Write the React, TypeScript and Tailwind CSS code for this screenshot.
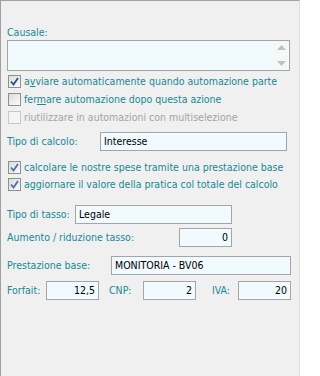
import React from "react";

const teal = "text-[#168a95]";

const Check = ({ checked, disabled, dim }: { checked?: boolean; disabled?: boolean; dim?: boolean }) => (
    <span
        className={`flex h-[13px] w-[13px] shrink-0 items-center justify-center border ${disabled ? "border-[#c8c8c8] bg-[#f4f4f4]" : "border-[#8e8f8f] bg-gradient-to-br from-[#dcdcdc] to-[#fbfbfb]"}`}
    >
        {checked && (
            <svg width="9" height="9" viewBox="0 0 9 9">
                <path d="M1 4.5 L3.5 7.5 L8 1" fill="none" stroke={dim ? "#4a6fae" : "#2e4c8c"} strokeWidth="1.8" />
            </svg>
        )}
    </span>
);

const Field = ({ value, className, right }: { value: string; className: string; right?: boolean }) => (
    <div className={`flex h-[19px] shrink-0 items-center border border-[#a5a5a5] bg-[#f0faff] px-[3px] text-black ${right ? "justify-end" : ""} ${className}`}>
        {value}
    </div>
);

export default function App() {
    return (
        <div
            className="flex h-[376px] w-[300px] flex-col overflow-hidden border-l border-t border-r border-[#a0a0a0] border-r-[#dedede] bg-[#f0f0f0] pl-[6px] pr-[8px] text-[10.5px] leading-[13px]"
            style={{ fontFamily: "Tahoma, 'DejaVu Sans Condensed', 'Liberation Sans', sans-serif" }}
        >
            <div className={`mt-[25px] whitespace-nowrap ${teal}`}>Causale:</div>
            <div className="mt-[1px] flex h-[31px] w-[283px] border border-[#a5a5a5] bg-[#f0faff]">
                <div className="flex-1" />
                <div className="flex w-[16px] flex-col items-center justify-between bg-[#f6f8f6] py-[4px]">
                    <svg width="9" height="5" viewBox="0 0 9 5">
                        <path d="M0 5 L4.5 0 L9 5 Z" fill="#b9c6bd" />
                    </svg>
                    <svg width="9" height="5" viewBox="0 0 9 5">
                        <path d="M0 0 L4.5 5 L9 0 Z" fill="#b9c6bd" />
                    </svg>
                </div>
            </div>

            <div className="mt-[1px] flex flex-col whitespace-nowrap">
                <label className={`flex h-[18px] items-center gap-[3px] pl-[1px] ${teal}`}>
                    <Check checked />
                    <span>a<span className="underline">v</span>viare automaticamente quando automazione parte</span>
                </label>
                <label className={`flex h-[18px] items-center gap-[3px] pl-[1px] ${teal}`}>
                    <Check />
                    <span>fer<span className="underline">m</span>are automazione dopo questa azione</span>
                </label>
                <label className="flex h-[18px] items-center gap-[3px] pl-[1px] text-[#a3a3a3]">
                    <Check disabled />
                    <span>riutilizzare in automazioni con multiselezione</span>
                </label>
            </div>

            <div className={`mt-[6px] flex items-center whitespace-nowrap ${teal}`}>
                <span className="w-[93px]">Tipo di calcolo:</span>
                <Field value="Interesse" className="w-[187px]" />
            </div>

            <div className="mt-[8px] flex flex-col whitespace-nowrap">
                <label className={`flex h-[17px] items-center gap-[3px] pl-[1px] ${teal}`}>
                    <Check checked dim />
                    <span>calcolare le nostre spese tramite una prestazione base</span>
                </label>
                <label className={`flex h-[17px] items-center gap-[3px] pl-[1px] ${teal}`}>
                    <Check checked dim />
                    <span>aggiornare il valore della pratica col totale del calcolo</span>
                </label>
            </div>

            <div className={`mt-[12px] flex items-center whitespace-nowrap ${teal}`}>
                <span className="w-[68px]">Tipo di tasso:</span>
                <Field value="Legale" className="w-[157px]" />
            </div>

            <div className={`mt-[4px] flex items-center whitespace-nowrap ${teal}`}>
                <span className="w-[172px]">Aumento / riduzione tasso:</span>
                <Field value="0" right className="w-[53px]" />
            </div>

            <div className={`mt-[9px] flex items-center whitespace-nowrap ${teal}`}>
                <span className="w-[104px]">Prestazione base:</span>
                <Field value="MONITORIA - BV06" className="w-[180px]" />
            </div>

            <div className={`mt-[6px] flex items-center whitespace-nowrap ${teal}`}>
                <span className="w-[39px]">Forfait:</span>
                <Field value="12,5" right className="w-[53px]" />
                <span className="ml-[10px] w-[34px]">CNP:</span>
                <Field value="2" right className="w-[53px]" />
                <span className="ml-[16px] w-[26px]">IVA:</span>
                <Field value="20" right className="w-[53px]" />
            </div>
        </div>
    );
}
